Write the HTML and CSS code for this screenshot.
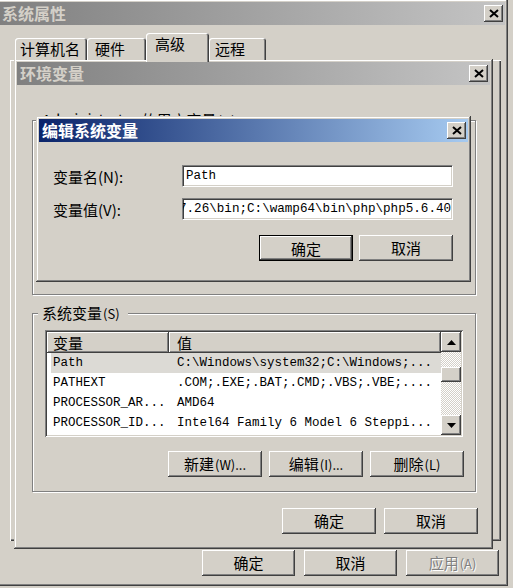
FILE: index.html
```html
<!DOCTYPE html>
<html lang="zh-CN">
<head>
    <meta charset="UTF-8">
    <meta name="viewport" content="width=device-width, initial-scale=1.0">
    <title>编辑系统变量</title>
    <link rel="stylesheet" href="styles.css">
</head>
<body>
<div class="desktop">

    <!-- 系统属性 -->
    <div class="win sysprops">
        <div class="titlebar inactive">
            <span class="title">系统属性</span>
            <button class="close"><svg width="10" height="9" viewBox="0 0 10 9"><path d="M1 1l8 7M9 1l-8 7" stroke="#000" stroke-width="2"/></svg></button>
        </div>
        <div class="tabs">
            <div class="tab t1">计算机名</div>
            <div class="tab t2">硬件</div>
            <div class="tab t3">高级</div>
            <div class="tab t4">远程</div>
        </div>
        <div class="tabpanel"></div>
        <div class="btnrow outer-btns">
            <button class="btn">确定</button>
            <button class="btn">取消</button>
            <button class="btn disabled">应用<span class="mn">(A)</span></button>
        </div>
    </div>

    <!-- 环境变量 -->
    <div class="win envvars">
        <div class="titlebar inactive">
            <span class="title">环境变量</span>
            <button class="close"><svg width="10" height="9" viewBox="0 0 10 9"><path d="M1 1l8 7M9 1l-8 7" stroke="#000" stroke-width="2"/></svg></button>
        </div>
        <div class="env-body">
            <fieldset class="group user-group">
                <legend>Administrator 的用户变量<span class="mn">(U)</span></legend>
            </fieldset>
            <fieldset class="group sys-group">
                <legend>系统变量<span class="mn">(S)</span></legend>
                <div class="listview">
                    <div class="lv-main">
                        <div class="lv-header">
                            <div class="hcol c1">变量</div>
                            <div class="hcol c2">值</div>
                        </div>
                        <div class="lv-row selected"><span class="c1">Path</span><span class="c2">C:\Windows\system32;C:\Windows;...</span></div>
                        <div class="lv-row"><span class="c1">PATHEXT</span><span class="c2">.COM;.EXE;.BAT;.CMD;.VBS;.VBE;....</span></div>
                        <div class="lv-row"><span class="c1">PROCESSOR_AR...</span><span class="c2">AMD64</span></div>
                        <div class="lv-row"><span class="c1">PROCESSOR_ID...</span><span class="c2">Intel64 Family 6 Model 6 Steppi...</span></div>
                    </div>
                    <div class="vscroll">
                        <div class="sb-btn"><svg width="9" height="5" viewBox="0 0 9 5"><path d="M0 5L4.5 0L9 5Z"/></svg></div>
                        <div class="sb-track"><div class="sb-thumb"></div></div>
                        <div class="sb-btn"><svg width="9" height="5" viewBox="0 0 9 5"><path d="M0 0L4.5 5L9 0Z"/></svg></div>
                    </div>
                </div>
                <div class="btnrow group-btns">
                    <button class="btn">新建<span class="mn">(W)...</span></button>
                    <button class="btn">编辑<span class="mn">(I)...</span></button>
                    <button class="btn">删除<span class="mn">(L)</span></button>
                </div>
            </fieldset>
            <div class="btnrow env-btns">
                <button class="btn">确定</button>
                <button class="btn">取消</button>
            </div>
        </div>
    </div>

    <!-- 编辑系统变量 -->
    <div class="win editvar">
        <div class="titlebar active">
            <span class="title">编辑系统变量</span>
            <button class="close"><svg width="10" height="9" viewBox="0 0 10 9"><path d="M1 1l8 7M9 1l-8 7" stroke="#000" stroke-width="2"/></svg></button>
        </div>
        <div class="edit-body">
            <div class="field-row">
                <label>变量名(N):</label>
                <div class="textbox">Path</div>
            </div>
            <div class="field-row">
                <label>变量值(V):</label>
                <div class="textbox scrolled"><span>7.26\bin;C:\wamp64\bin\php\php5.6.40</span></div>
            </div>
            <div class="btnrow edit-btns">
                <button class="btn default">确定</button>
                <button class="btn">取消</button>
            </div>
        </div>
    </div>

</div>
</body>
</html>
```

FILE: styles.css
```css
* {
    box-sizing: border-box;
}
body {
    margin: 0;
    width: 513px;
    height: 588px;
    overflow: hidden;
    background: #d4d0c8;
    font-family: "Noto Sans CJK SC", sans-serif;
    font-size: 15px;
    color: #000;
}
.desktop {
    position: relative;
    width: 513px;
    height: 588px;
}
button {
    font: inherit;
    color: inherit;
    border: 0;
    padding: 0;
}

/* windows */
.win {
    position: absolute;
    background: #d4d0c8;
    padding: 3px;
    box-shadow: inset -1px -1px #404040, inset 1px 1px #d4d0c8, inset -2px -2px #808080, inset 2px 2px #fff;
}
.sysprops {
    left: -4px;
    top: -1px;
    width: 512px;
    height: 587px;
}
.envvars {
    left: 14px;
    top: 59px;
    width: 479px;
    height: 490px;
}
.editvar {
    left: 36px;
    top: 116px;
    width: 435px;
    height: 166px;
}

.titlebar {
    display: flex;
    align-items: center;
    justify-content: space-between;
    height: 23px;
    padding: 0 2px 0 3px;
}
.titlebar.inactive {
    background: linear-gradient(to right, #808080, #c4c4c4);
    color: #d4d0c8;
}
.titlebar.active {
    background: linear-gradient(to right, #0a246a, #a6caf0);
    color: #fff;
}
.title {
    font-size: 16px;
    font-weight: bold;
    line-height: 23px;
}

/* raised 3d things */
.btn, .close, .sb-btn, .sb-thumb, .hcol {
    background: #d4d0c8;
    box-shadow: inset -1px -1px #404040, inset 1px 1px #fff, inset -2px -2px #808080, inset 2px 2px #d4d0c8;
}
.close {
    width: 19px;
    height: 17px;
    display: flex;
    align-items: center;
    justify-content: center;
}
.btn {
    height: 26px;
    width: 94px;
    font-size: 15px;
    line-height: 26px;
}
.btn.default {
    border: 1px solid #000;
}
.btn.disabled {
    color: #808080;
    text-shadow: 1px 1px #fff;
}
.mn {
    font-size: 13px;
    margin-left: 1px;
}
.btnrow {
    display: flex;
    justify-content: flex-end;
}

/* tabs */
.tabs {
    display: flex;
    align-items: flex-end;
    height: 27px;
    margin: 8px 0 0 16px;
    position: relative;
    z-index: 1;
}
.tab {
    height: 22px;
    padding-top: 1px;
    line-height: 20px;
    background: #d4d0c8;
    border-radius: 3px 3px 0 0;
    box-shadow: inset 1px 1px #fff, inset -1px 0 #404040, inset -2px 0 #808080;
}
.tab.t1 { width: 72px; padding-left: 5px; }
.tab.t2 { width: 59px; padding-left: 8px; }
.tab.t3 {
    width: 63px;
    height: 29px;
    margin-bottom: -2px;
    padding-left: 9px;
    padding-top: 0;
    line-height: 22px;
}
.tab.t4 { width: 57px; padding-left: 6px; }

.tabpanel {
    margin-left: 11px;
    width: 491px;
    height: 481px;
    box-shadow: inset 1px 1px #fff, inset -1px -1px #404040, inset -2px -2px #808080;
}
.outer-btns {
    margin-top: 9px;
    padding-right: 6px;
    gap: 9px;
}
.outer-btns .btn {
    width: 93px;
}

/* environment variables */
.env-body {
    padding-left: 15px;
}
.group {
    margin: 0;
    padding: 0;
    width: 444px;
    min-inline-size: 0;
    border: 1px solid #808080;
    box-shadow: inset 1px 1px #fff, 1px 1px #fff;
}
.group legend {
    margin-left: 5px;
    padding: 0 8px 0 4px;
    line-height: 18px;
    background: #d4d0c8;
}
.user-group {
    margin-top: 26px;
    height: 184px;
}
.sys-group {
    margin-top: 9px;
    padding-bottom: 14px;
}

.listview {
    display: flex;
    margin: 7px 0 0 12px;
    width: 418px;
    height: 107px;
    padding: 2px;
    background: #fff;
    box-shadow: inset 1px 1px #808080, inset -1px -1px #fff, inset 2px 2px #404040, inset -2px -2px #d4d0c8;
}
.lv-main {
    flex: 1;
}
.lv-header {
    display: flex;
    height: 21px;
}
.hcol {
    line-height: 21px;
}
.hcol.c1 {
    width: 122px;
    padding-left: 6px;
}
.hcol.c2 {
    flex: 1;
    padding-left: 8px;
}
.lv-row {
    display: flex;
    height: 20px;
    margin-left: 4px;
    line-height: 20px;
    font-family: "Liberation Mono", monospace;
    font-size: 12.5px;
    white-space: nowrap;
}
.lv-row.selected {
    background: #dcdad5;
}
.lv-row .c1 {
    width: 126px;
    padding-left: 2px;
}
.vscroll {
    width: 20px;
    display: flex;
    flex-direction: column;
}
.sb-btn {
    height: 20px;
    display: flex;
    align-items: center;
    justify-content: center;
}
.sb-track {
    flex: 1;
    background: repeating-conic-gradient(#fff 0 25%, #d4d0c8 0 50%) 0 0 / 2px 2px;
}
.sb-thumb {
    height: 15px;
    margin-top: 15px;
}
.group-btns {
    margin-top: 14px;
    padding-right: 11px;
    gap: 7px;
}
.env-btns {
    margin-top: 16px;
    padding-right: 12px;
    gap: 8px;
}

/* edit dialog */
.edit-body {
    padding: 23px 15px 0 14px;
}
.field-row {
    display: flex;
    align-items: center;
    height: 22px;
}
.field-row + .field-row {
    margin-top: 11px;
}
.field-row label {
    width: 129px;
}
.textbox {
    width: 271px;
    height: 22px;
    padding: 0 1px 0 3px;
    background: #fff;
    border: 1px solid;
    border-color: #808080 #fff #fff #808080;
    box-shadow: inset 1px 1px #404040, inset -1px -1px #d4d0c8;
    font-family: "Liberation Mono", monospace;
    font-size: 12.5px;
    line-height: 20px;
    white-space: nowrap;
    overflow: hidden;
}
.textbox.scrolled {
    padding-left: 0;
    font-size: 12.6px;
}
.textbox.scrolled span {
    margin-left: -4px;
}
.edit-btns {
    margin-top: 15px;
    gap: 6px;
}
```
